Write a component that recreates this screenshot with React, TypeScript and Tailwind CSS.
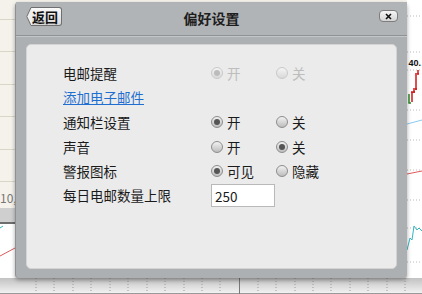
import React from 'react'

const font = { fontFamily: '"Noto Sans CJK SC", "Noto Sans", sans-serif' }

type Opt = { label: string; checked: boolean }

const rows: { label: string; options: Opt[]; disabled?: boolean }[] = [
  { label: '通知栏设置', options: [{ label: '开', checked: true }, { label: '关', checked: false }] },
  { label: '声音', options: [{ label: '开', checked: false }, { label: '关', checked: true }] },
  { label: '警报图标', options: [{ label: '可见', checked: true }, { label: '隐藏', checked: false }] },
]

function Radio({ checked, disabled }: { checked: boolean; disabled?: boolean }) {
  return (
    <span
      className={`flex h-[12px] w-[12px] items-center justify-center rounded-full border ${
        disabled
          ? 'border-[#c9c9c9] bg-gradient-to-b from-[#f4f4f4] to-[#d9d9d9]'
          : 'border-[#8d8d8d] bg-gradient-to-b from-[#f2f2f2] to-[#bdbdbd]'
      }`}
    >
      {checked && (
        <span
          className={`h-[6px] w-[6px] rounded-full ${disabled ? 'bg-[#bcbcbc]' : 'bg-[#555]'}`}
        />
      )}
    </span>
  )
}

function Option({ opt, disabled }: { opt: Opt; disabled?: boolean }) {
  return (
    <div className="flex w-[65px] items-center gap-[4px]">
      <Radio checked={opt.checked} disabled={disabled} />
      <span className={disabled ? 'text-[#bdbdbd]' : 'text-[#1a1a1a]'}>{opt.label}</span>
    </div>
  )
}

const axisTicks = [36, 54, 73, 91, 110, 128, 147, 165, 184, 202, 220, 258, 276, 295, 313, 331, 350, 368, 387, 405]

function Background() {
  return (
    <div className="flex h-full w-full flex-col">
      <div className="flex h-[278px]">
        {/* left table strip */}
        <div className="flex w-[15px] flex-col bg-[#f4f2ea]">
          <div className="h-[20px] border-b border-[#d9d6c8]" />
          <div className="h-[32px] border-b border-[#d9d6c8]" />
          <div className="h-[33px] border-b border-[#d9d6c8]" />
          <div className="h-[32px] border-b border-[#d9d6c8]" />
          <div className="h-[33px] border-b border-[#d9d6c8]" />
          <div className="h-[32px] border-b border-[#d9d6c8]" />
          <div className="h-[26px] pt-[10px] text-[12px] leading-none text-[#777]" style={font}>
            10,
          </div>
          <div className="h-[16px] border-b-2 border-[#6d6d6d] bg-[#cfcfcf]" />
          <div className="flex-1 bg-white">
            <svg width="15" height="52">
              <line x1="0" y1="32" x2="15" y2="24" stroke="#e05a5a" strokeWidth="1" />
              <line x1="0" y1="4" x2="3" y2="2" stroke="#37b6c0" strokeWidth="1" />
            </svg>
          </div>
        </div>
        <div className="flex-1 bg-[#f4f2ea]" />
        {/* right chart strip */}
        <div className="w-[15px] bg-white">
          <svg width="15" height="278">
            {[16, 52, 70, 110, 140, 170, 200, 228, 262].map((y) => (
              <line key={y} x1="0" y1={y} x2="15" y2={y} stroke="#bbb" strokeDasharray="1 2" />
            ))}
            <text x="1.5" y="66" fontSize="9" fontWeight="bold" fill="#111" fontFamily="Liberation Sans, sans-serif">
              40.
            </text>
            <path d="M2 94 V103 H4" stroke="#2a8a2a" fill="none" strokeWidth="1.5" />
            <path d="M5 102 V92 M4 92 H8 M7 93 V90 M6 89 H10 M9 90 V75 M8 74 H12 M11 74 V70" stroke="#d01818" fill="none" strokeWidth="1.5" />
            <line x1="0" y1="124" x2="15" y2="120" stroke="#8ccaf0" strokeWidth="1" />
            <line x1="0" y1="174" x2="15" y2="171" stroke="#e05a5a" strokeWidth="1" />
            <path d="M0 250 L3 238 L5 240 L7 226 L10 230 L12 228 L15 231" stroke="#37b6c0" fill="none" strokeWidth="1" />
          </svg>
        </div>
      </div>
      {/* bottom axis strip */}
      <div className="h-[16px] border-b border-[#999] bg-gradient-to-b from-[#c2c2c2] to-[#f2f2f2]">
        <svg width="422" height="16">
          {axisTicks.map((x) => (
            <line key={x} x1={x} y1="0" x2={x} y2="16" stroke="#9a9a9a" strokeDasharray="1 2" />
          ))}
          <line x1="239.5" y1="0" x2="239.5" y2="16" stroke="#777" />
        </svg>
      </div>
    </div>
  )
}

export default function App() {
  return (
    <div className="relative h-[294px] w-[422px] overflow-hidden bg-[#8a8a8a]" style={font}>
      <Background />

      {/* Dialog */}
      <div className="absolute left-[15px] top-[2px] flex h-[276px] w-[392px] flex-col rounded-[4px] border-l border-[#8e9193] bg-[#adb0b2] shadow-[0_2px_4px_rgba(0,0,0,0.35)]">
        {/* Header */}
        <div className="relative flex h-[34px] items-center justify-center border-b border-[#8f9294] bg-[#b1b4b6] shadow-[0_1px_0_#c4c6c8]">
          <button className="absolute left-[10px] top-[5px] flex h-[19px] items-center">
            <svg width="7" height="19" className="-mr-px">
              <path d="M7 0.5 H5 L0.8 9.5 L5 18.5 H7" fill="#f0f0f0" stroke="#6f6f6f" />
            </svg>
            <span className="flex h-[19px] items-center rounded-r-[3px] border border-l-0 border-[#6f6f6f] bg-gradient-to-b from-[#fafafa] to-[#d8d8d8] pr-[3px] text-[13px] font-bold leading-none text-[#111]">
              返回
            </span>
          </button>
          <span className="text-[14px] font-bold text-[#1e1e1e]">偏好设置</span>
          <button className="absolute right-[9px] top-[8px] flex h-[12px] w-[19px] items-center justify-center rounded-[4px] border border-[#7d7d7d] bg-gradient-to-b from-[#f6f6f6] to-[#d4d4d4]">
            <svg width="7" height="7" viewBox="0 0 7 7">
              <path d="M1 1 L6 6 M6 1 L1 6" stroke="#111" strokeWidth="1.6" />
            </svg>
          </button>
        </div>

        {/* Body */}
        <div className="flex-1 px-[10px] pb-[9px] pt-[8px]">
          <div className="h-full rounded-[5px] border border-[#d4d4d4] bg-[#ebebeb] pl-[36px] pt-[17px] text-[13.5px] text-[#1a1a1a]">
            <div className="flex h-[22px] items-center">
              <span className="w-[148px]">电邮提醒</span>
              <Option opt={{ label: '开', checked: true }} disabled />
              <Option opt={{ label: '关', checked: false }} disabled />
            </div>
            <div className="flex h-[26px] items-center">
              <a href="#" className="text-[#1f6fd1] underline">
                添加电子邮件
              </a>
            </div>
            {rows.map((r) => (
              <div key={r.label} className="flex h-[24.5px] items-center">
                <span className="w-[148px]">{r.label}</span>
                {r.options.map((o) => (
                  <Option key={o.label} opt={o} />
                ))}
              </div>
            ))}
            <div className="flex h-[24px] items-center">
              <span className="w-[148px]">每日电邮数量上限</span>
              <input
                defaultValue="250"
                className="h-[23px] w-[64px] border border-[#b9b9b9] bg-white px-[3px] text-[13.5px] text-[#1a1a1a] outline-none"
                style={font}
              />
            </div>
          </div>
        </div>
      </div>
    </div>
  )
}
